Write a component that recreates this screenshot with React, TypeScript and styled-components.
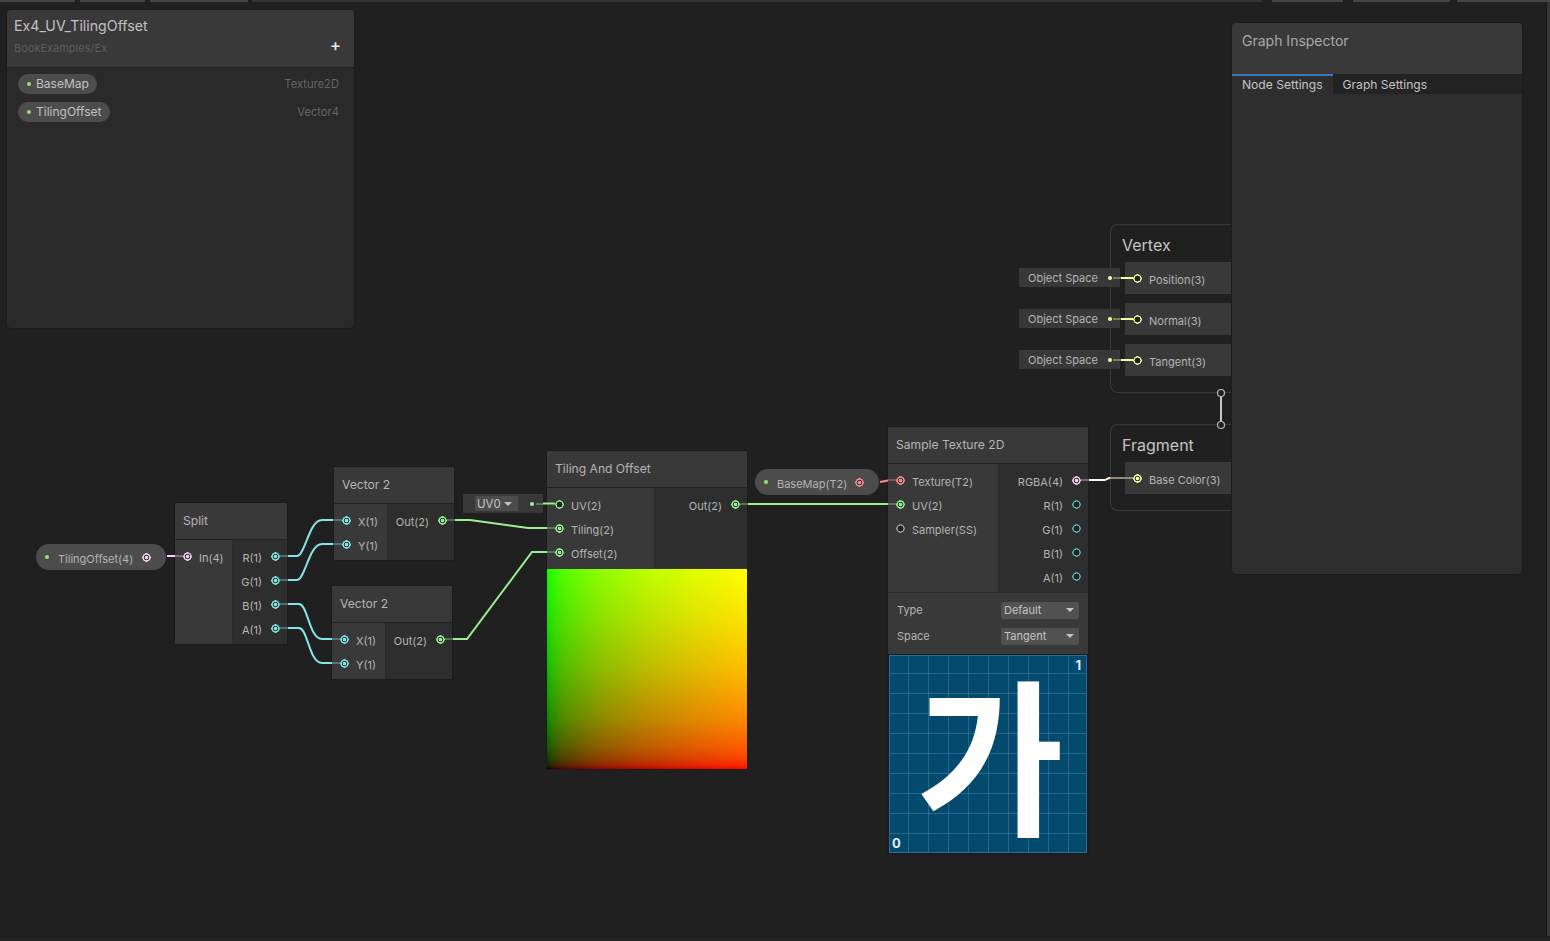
import * as React from "react";
import styled, { createGlobalStyle } from "styled-components";

const GlobalStyle = createGlobalStyle`
  html, body {
    margin: 0;
    padding: 0;
    background: #202020;
  }
  body {
    font-family: "Inter", "Noto Sans", sans-serif;
    color: #bdbdbd;
    overflow: hidden;
  }
`;

const colors = {
  vec1: "#84e4e7",
  vec1Idle: "#5fb4b8",
  vec2: "#9aef92",
  vec3: "#f6ff9a",
  vec4: "#fbcbf4",
  tex: "#ff8b8b",
  sampler: "#9f9f9f",
};

// the preview is a gamma-encoded uv ramp, so the stops follow the sRGB curve
const ramp = (dir: string, ch: (v: number) => string) =>
  `linear-gradient(${dir}, ${[
    [0, 0],
    [1, 25],
    [2.5, 44],
    [5, 63],
    [10, 89],
    [25, 137],
    [50, 188],
    [75, 225],
    [100, 255],
  ]
    .map(([at, v]) => `${ch(v)} ${at}%`)
    .join(", ")})`;

const Canvas = styled.div`
  position: relative;
  width: 1550px;
  height: 941px;
  overflow: hidden;
  background: #202020;
  display: flex;
  flex-direction: column;
`;

const TopStrip = styled.div`
  display: flex;
  height: 2px;
  flex: none;
`;

const TopSegment = styled.div<{ $w: number; $gap?: number; $dim?: boolean }>`
  width: ${(p) => p.$w}px;
  margin-right: ${(p) => p.$gap ?? 0}px;
  background: ${(p) => (p.$dim ? "#333333" : "#444444")};
`;

const Middle = styled.div`
  flex: 1;
  display: flex;
  justify-content: flex-end;
`;

const RightEdge = styled.div`
  width: 3px;
  background: #353535;
  border-left: 1px solid #191919;
`;

const BottomEdge = styled.div`
  height: 4px;
  flex: none;
  border-top: 1px solid #191919;
  background: #232323;
`;

const Placed = styled.div<{ $x: number; $y: number; $w?: number }>`
  position: absolute;
  left: ${(p) => p.$x}px;
  top: ${(p) => p.$y}px;
  ${(p) => (p.$w ? `width: ${p.$w}px;` : "")}
`;

const Node = styled(Placed)`
  background: #393939;
  box-shadow: 0 0 0 1px #1c1c1c;
`;

const NodeHeader = styled.div`
  height: 37px;
  box-sizing: border-box;
  padding: 0 8px 1px;
  display: flex;
  align-items: center;
  font-size: 12.1px;
  color: #b4b4b4;
  border-bottom: 1px solid #232323;
`;

const NodeBody = styled.div`
  display: flex;
`;

const Col = styled.div<{ $w: number; $out?: boolean }>`
  width: ${(p) => p.$w}px;
  box-sizing: border-box;
  padding: 4px 0;
  background: ${(p) => (p.$out ? "#2e2e2e" : "#393939")};
  ${(p) => (p.$out ? "border-left: 1px solid #2a2a2a;" : "")}
`;

const Row = styled.div<{ $out?: boolean }>`
  height: 24px;
  display: flex;
  align-items: center;
  gap: ${(p) => (p.$out ? "9px" : "7px")};
  flex-direction: ${(p) => (p.$out ? "row-reverse" : "row")};
  padding: ${(p) => (p.$out ? "0 7px 0 0" : "0 0 0 8px")};
`;

const Label = styled.span`
  font-size: 11px;
  color: #b4b4b4;
  padding-top: 3px;
  white-space: nowrap;
`;

const Port = styled.span<{ $c: string; $empty?: boolean }>`
  flex: none;
  width: 9px;
  height: 9px;
  border-radius: 50%;
  background: ${(p) =>
    p.$empty
      ? `radial-gradient(circle, #1d211b 0 2.7px, ${p.$c} 3.2px 4px, transparent 4.5px)`
      : `radial-gradient(circle, ${p.$c} 0 1.5px, #24362c 2.1px 2.5px, ${p.$c} 3.1px 4px, transparent 4.5px)`};
`;

const Pill = styled(Placed)`
  height: 26px;
  box-sizing: border-box;
  display: flex;
  align-items: center;
  padding: 0 15px 0 9px;
  border-radius: 13px;
  background: #4c4c4d;
  gap: 8px;
`;

const GreenDot = styled.span`
  flex: none;
  width: 4px;
  height: 4px;
  border-radius: 50%;
  background: #9be36e;
`;

const PillLabel = styled(Label)`
  flex: 1;
  padding-left: 1px;
`;

const Preview = styled.div`
  width: 200px;
  height: 200px;
  margin-top: 1px;
  background-image: ${ramp("to right", (v) => `rgb(${v}, 0, 0)`)},
    ${ramp("to top", (v) => `rgb(0, ${v}, 0)`)};
  background-blend-mode: screen;
`;

const Controls = styled.div`
  height: 62px;
  box-sizing: border-box;
  padding: 4px 9px 0;
  background: #393939;
  border-top: 1px solid #2a2a2a;
`;

const ControlRow = styled.div`
  height: 26px;
  display: flex;
  align-items: center;
  justify-content: space-between;
`;

const ControlLabel = styled(Label)`
  padding-top: 0;
`;

const Select = styled.div`
  width: 78px;
  height: 17px;
  box-sizing: border-box;
  padding: 0 5px 0 3px;
  border-radius: 2px;
  background: #515151;
  display: flex;
  align-items: center;
  justify-content: space-between;
  font-size: 11px;
  color: #c4c4c4;
`;

const Caret = styled.span`
  width: 0;
  height: 0;
  border-left: 4px solid transparent;
  border-right: 4px solid transparent;
  border-top: 4px solid #c4c4c4;
`;

const TextureFrame = styled.div`
  height: 200px;
  box-sizing: border-box;
  border: 1px solid #1c1c1c;
  background: #202020;
`;

const Texture = styled.div`
  position: relative;
  height: 100%;
  box-sizing: border-box;
  border: 1px solid #2f6a92;
  background-color: #034a6e;
  background-image:
    linear-gradient(to right, rgba(160, 205, 225, 0.22) 1px, transparent 1px),
    linear-gradient(to bottom, rgba(160, 205, 225, 0.22) 1px, transparent 1px);
  background-size: 20px 20px;
  background-position: 18px 17px;
  display: flex;
  align-items: center;
  justify-content: center;
`;

const Hangul = styled.span`
  font-family: "Noto Sans CJK KR", "Noto Sans", sans-serif;
  font-size: 160px;
  font-weight: 700;
  line-height: 1;
  color: #fff;
  margin: -10px 0 0 4px;
  transform: scaleY(1.05);
`;

const Corner = styled.span<{ $top?: boolean }>`
  position: absolute;
  font-size: 13px;
  font-weight: 700;
  color: #e6eef2;
  ${(p) => (p.$top ? "top: 1px; right: 5px;" : "bottom: 1px; left: 2px;")}
`;

const Inline = styled(Placed)`
  height: 19px;
  box-sizing: border-box;
  background: #383838;
  display: flex;
  align-items: center;
  font-size: 11px;
  color: #b4b4b4;
`;

const UVSelect = styled.div`
  margin-left: 12px;
  width: 43px;
  height: 15px;
  box-sizing: border-box;
  padding: 0 6px 0 2px;
  background: #4c4c4c;
  border-radius: 1px;
  display: flex;
  align-items: center;
  justify-content: space-between;
  font-size: 11.5px;
  color: #c4c4c4;
`;

const SpaceLabel = styled.span`
  padding-left: 9px;
`;

const InlineDot = styled.span<{ $left: number; $c: string }>`
  position: absolute;
  left: ${(p) => p.$left}px;
  top: 7.5px;
  width: 4px;
  height: 4px;
  border-radius: 50%;
  background: ${(p) => p.$c};
`;

const Block = styled(Placed)<{ $h: number }>`
  height: ${(p) => p.$h}px;
  box-sizing: border-box;
  border: 1px solid #3a3a3a;
  border-radius: 8px 0 0 8px;
  border-right: 0;
  padding: 0 0 0 14px;
`;

const BlockTitle = styled.div`
  height: 37px;
  box-sizing: border-box;
  padding-top: 2px;
  margin-left: -3px;
  display: flex;
  align-items: center;
  font-size: 16px;
  color: #c4c4c4;
`;

const SlotList = styled.div`
  display: flex;
  flex-direction: column;
  gap: 9px;
`;

const Slot = styled.div`
  height: 32px;
  display: flex;
  align-items: center;
  gap: 7px;
  padding-left: 8px;
  background: #393939;
`;

const Blackboard = styled(Placed)`
  height: 320px;
  box-sizing: border-box;
  border-radius: 5px;
  background: #2a2a2a;
  border: 1px solid #1c1c1c;
  overflow: hidden;
`;

const BoardHeader = styled.div`
  height: 58px;
  box-sizing: border-box;
  padding: 7px 7px 0;
  background: #393939;
  border-bottom: 1px solid #202020;
  position: relative;
`;

const BoardTitle = styled.div`
  font-size: 14.2px;
  line-height: 18px;
  color: #c0c0c0;
`;

const BoardSub = styled.div`
  margin-top: 6px;
  font-size: 11px;
  color: #5c5c5c;
`;

const AddButton = styled.span`
  position: absolute;
  right: 13px;
  top: 26px;
  font-size: 17px;
  line-height: 18px;
  font-weight: 500;
  color: #e6e6e6;
`;

const BoardList = styled.div`
  padding: 6px 15px 0 11px;
  display: flex;
  flex-direction: column;
  gap: 8px;
`;

const BoardRow = styled.div`
  height: 20px;
  display: flex;
  align-items: center;
  justify-content: space-between;
`;

const Chip = styled.div`
  height: 20px;
  box-sizing: border-box;
  padding: 0 8px 1px 9px;
  display: flex;
  align-items: center;
  gap: 5px;
  border-radius: 10px;
  background: #4c4c4d;
  font-size: 12px;
  color: #c0c0c0;
`;

const TypeName = styled.span`
  font-size: 11.2px;
  color: #666666;
`;

const Inspector = styled(Placed)`
  height: 553px;
  box-sizing: border-box;
  border-radius: 5px;
  background: #2e2e2e;
  border: 1px solid #1c1c1c;
  overflow: hidden;
  display: flex;
  flex-direction: column;
`;

const InspectorHeader = styled.div`
  height: 51px;
  flex: none;
  box-sizing: border-box;
  padding: 9px 10px;
  background: #393939;
  font-size: 14px;
  line-height: 18px;
  color: #a8a8a8;
`;

const Tabs = styled.div`
  display: flex;
  height: 20px;
  flex: none;
  background: #232323;
`;

const Tab = styled.div<{ $active?: boolean }>`
  box-sizing: border-box;
  padding: 0 10px;
  display: flex;
  align-items: center;
  font-size: 12.1px;
  color: #c4c4c4;
  ${(p) =>
    p.$active
      ? "background: #2e2e2e; border-top: 2px solid #3a79bb; padding-bottom: 1px;"
      : ""}
`;

const Wires = styled.svg`
  position: absolute;
  left: 0;
  top: 0;
  pointer-events: none;
`;

const Joint = styled.circle`
  fill: #202020;
  stroke: #b8b8b8;
  stroke-width: 1.2;
`;

type WireDef = { d: string; c: string; dim?: boolean };

const dim = (d: string, c: string): WireDef => ({ d, c, dim: true });

const wires: WireDef[] = [
  { d: "M167 556H175", c: colors.vec4 },
  dim("M175 556H183", colors.vec4),
  dim("M280 556H288", colors.vec1),
  dim("M280 580H288", colors.vec1),
  dim("M280 604H288", colors.vec1),
  dim("M280 628H288", colors.vec1),
  { d: "M288 556H297C305 556 309 520 322 520H333", c: colors.vec1 },
  { d: "M288 580H297C305 580 309 544 322 544H333", c: colors.vec1 },
  { d: "M288 604H299C308 604 309 639 322 639H332", c: colors.vec1 },
  { d: "M288 628H299C308 628 309 663 322 663H332", c: colors.vec1 },
  dim("M333 520H342", colors.vec1),
  dim("M333 544H342", colors.vec1),
  dim("M332 639H340", colors.vec1),
  dim("M332 663H340", colors.vec1),
  dim("M447 520H455", colors.vec2),
  dim("M445 639H453", colors.vec2),
  { d: "M455 520H470L528 528H547", c: colors.vec2 },
  { d: "M453 639H467L532 552H547", c: colors.vec2 },
  dim("M547 528H555", colors.vec2),
  dim("M547 552H555", colors.vec2),
  dim("M536 504H543", colors.vec2),
  { d: "M543 503.5H555", c: colors.vec2 },
  dim("M740 504H748", colors.vec2),
  { d: "M748 504H888", c: colors.vec2 },
  dim("M888 504H896", colors.vec2),
  { d: "M880 482L888 480.5", c: colors.tex },
  dim("M888 480H896", colors.tex),
  dim("M1081 480H1089", colors.vec4),
  { d: "M1089 480H1104C1107 480 1107 478 1110 478", c: "#fff3ea" },
  { d: "M1110 478H1133", c: "#8e8a74" },
  { d: "M1121 278H1133", c: colors.vec3 },
  { d: "M1121 319H1133", c: colors.vec3 },
  { d: "M1121 360H1133", c: colors.vec3 },
  dim("M1113 278H1121", colors.vec3),
  dim("M1113 319H1121", colors.vec3),
  dim("M1113 360H1121", colors.vec3),
  { d: "M1221 397V421", c: "#c8c8c8" },
];

const App = () => {
  return (
    <Canvas>
      <GlobalStyle />
      <TopStrip>
        <TopSegment $w={75} $gap={5} />
        <TopSegment $w={65} $gap={5} />
        <TopSegment $w={98} $gap={4} />
        <TopSegment $w={916} $dim />
        <TopSegment $w={94} $gap={10} $dim />
        <TopSegment $w={71} $gap={10} />
        <TopSegment $w={97} $gap={7} />
        <TopSegment $w={93} />
      </TopStrip>
      <Middle>
        <RightEdge />
      </Middle>
      <BottomEdge />

      <Blackboard $x={6} $y={9} $w={349}>
        <BoardHeader>
          <BoardTitle>Ex4_UV_TilingOffset</BoardTitle>
          <BoardSub>BookExamples/Ex</BoardSub>
          <AddButton>+</AddButton>
        </BoardHeader>
        <BoardList>
          <BoardRow>
            <Chip>
              <GreenDot />
              BaseMap
            </Chip>
            <TypeName>Texture2D</TypeName>
          </BoardRow>
          <BoardRow>
            <Chip>
              <GreenDot />
              TilingOffset
            </Chip>
            <TypeName>Vector4</TypeName>
          </BoardRow>
        </BoardList>
      </Blackboard>

      <Pill $x={36} $y={544} $w={130}>
        <GreenDot />
        <PillLabel>TilingOffset(4)</PillLabel>
        <Port $c={colors.vec4} />
      </Pill>

      <Node $x={175} $y={503} $w={112}>
        <NodeHeader>Split</NodeHeader>
        <NodeBody>
          <Col $w={57}>
            <Row>
              <Port $c={colors.vec4} />
              <Label>In(4)</Label>
            </Row>
          </Col>
          <Col $w={55} $out>
            {["R(1)", "G(1)", "B(1)", "A(1)"].map((n) => (
              <Row $out key={n}>
                <Port $c={colors.vec1} />
                <Label>{n}</Label>
              </Row>
            ))}
          </Col>
        </NodeBody>
      </Node>

      <Node $x={334} $y={467} $w={120}>
        <NodeHeader>Vector 2</NodeHeader>
        <NodeBody>
          <Col $w={53}>
            <Row>
              <Port $c={colors.vec1} />
              <Label>X(1)</Label>
            </Row>
            <Row>
              <Port $c={colors.vec1} />
              <Label>Y(1)</Label>
            </Row>
          </Col>
          <Col $w={67} $out>
            <Row $out>
              <Port $c={colors.vec2} />
              <Label>Out(2)</Label>
            </Row>
          </Col>
        </NodeBody>
      </Node>

      <Node $x={332} $y={586} $w={120}>
        <NodeHeader>Vector 2</NodeHeader>
        <NodeBody>
          <Col $w={53}>
            <Row>
              <Port $c={colors.vec1} />
              <Label>X(1)</Label>
            </Row>
            <Row>
              <Port $c={colors.vec1} />
              <Label>Y(1)</Label>
            </Row>
          </Col>
          <Col $w={67} $out>
            <Row $out>
              <Port $c={colors.vec2} />
              <Label>Out(2)</Label>
            </Row>
          </Col>
        </NodeBody>
      </Node>

      <Inline $x={463} $y={494} $w={80}>
        <UVSelect>
          UV0
          <Caret />
        </UVSelect>
        <InlineDot $left={67} $c="#a8ef9c" />
      </Inline>

      <Node $x={547} $y={451} $w={200}>
        <NodeHeader>Tiling And Offset</NodeHeader>
        <NodeBody>
          <Col $w={107}>
            <Row>
              <Port $c={colors.vec2} $empty />
              <Label>UV(2)</Label>
            </Row>
            <Row>
              <Port $c={colors.vec2} />
              <Label>Tiling(2)</Label>
            </Row>
            <Row>
              <Port $c={colors.vec2} />
              <Label>Offset(2)</Label>
            </Row>
          </Col>
          <Col $w={93} $out>
            <Row $out>
              <Port $c={colors.vec2} />
              <Label>Out(2)</Label>
            </Row>
          </Col>
        </NodeBody>
        <Preview />
      </Node>

      <Pill $x={755} $y={469} $w={124}>
        <GreenDot />
        <PillLabel>BaseMap(T2)</PillLabel>
        <Port $c={colors.tex} />
      </Pill>

      <Node $x={888} $y={427} $w={200}>
        <NodeHeader>Sample Texture 2D</NodeHeader>
        <NodeBody>
          <Col $w={110}>
            <Row>
              <Port $c={colors.tex} />
              <Label>Texture(T2)</Label>
            </Row>
            <Row>
              <Port $c={colors.vec2} />
              <Label>UV(2)</Label>
            </Row>
            <Row>
              <Port $c={colors.sampler} $empty />
              <Label>Sampler(SS)</Label>
            </Row>
          </Col>
          <Col $w={90} $out>
            <Row $out>
              <Port $c={colors.vec4} />
              <Label>RGBA(4)</Label>
            </Row>
            {["R(1)", "G(1)", "B(1)", "A(1)"].map((n) => (
              <Row $out key={n}>
                <Port $c={colors.vec1Idle} $empty />
                <Label>{n}</Label>
              </Row>
            ))}
          </Col>
        </NodeBody>
        <Controls>
          <ControlRow>
            <ControlLabel>Type</ControlLabel>
            <Select>
              Default
              <Caret />
            </Select>
          </ControlRow>
          <ControlRow>
            <ControlLabel>Space</ControlLabel>
            <Select>
              Tangent
              <Caret />
            </Select>
          </ControlRow>
        </Controls>
        <TextureFrame>
          <Texture>
            <Hangul>가</Hangul>
            <Corner $top>1</Corner>
            <Corner>0</Corner>
          </Texture>
        </TextureFrame>
      </Node>

      <Block $x={1110} $y={224} $w={125} $h={169}>
        <BlockTitle>Vertex</BlockTitle>
        <SlotList>
          <Slot>
            <Port $c={colors.vec3} $empty />
            <Label>Position(3)</Label>
          </Slot>
          <Slot>
            <Port $c={colors.vec3} $empty />
            <Label>Normal(3)</Label>
          </Slot>
          <Slot>
            <Port $c={colors.vec3} $empty />
            <Label>Tangent(3)</Label>
          </Slot>
        </SlotList>
      </Block>

      <Block $x={1110} $y={424} $w={125} $h={87}>
        <BlockTitle>Fragment</BlockTitle>
        <Slot>
          <Port $c={colors.vec3} />
          <Label>Base Color(3)</Label>
        </Slot>
      </Block>

      {[268, 309, 350].map((y) => (
        <Inline $x={1019} $y={y} $w={101} key={y}>
          <SpaceLabel>Object Space</SpaceLabel>
          <InlineDot $left={89} $c={colors.vec3} />
        </Inline>
      ))}

      <Wires width={1550} height={941}>
        {wires.map((w, i) => (
          <path
            key={i}
            d={w.d}
            fill="none"
            stroke={w.c}
            strokeWidth={2}
            opacity={w.dim ? 0.35 : 1}
          />
        ))}
        <Joint cx={1221} cy={393} r={3.5} />
        <Joint cx={1221} cy={425} r={3.5} />
      </Wires>

      <Inspector $x={1231} $y={22} $w={292}>
        <InspectorHeader>Graph Inspector</InspectorHeader>
        <Tabs>
          <Tab $active>Node Settings</Tab>
          <Tab>Graph Settings</Tab>
        </Tabs>
      </Inspector>
    </Canvas>
  );
};

export default App;
